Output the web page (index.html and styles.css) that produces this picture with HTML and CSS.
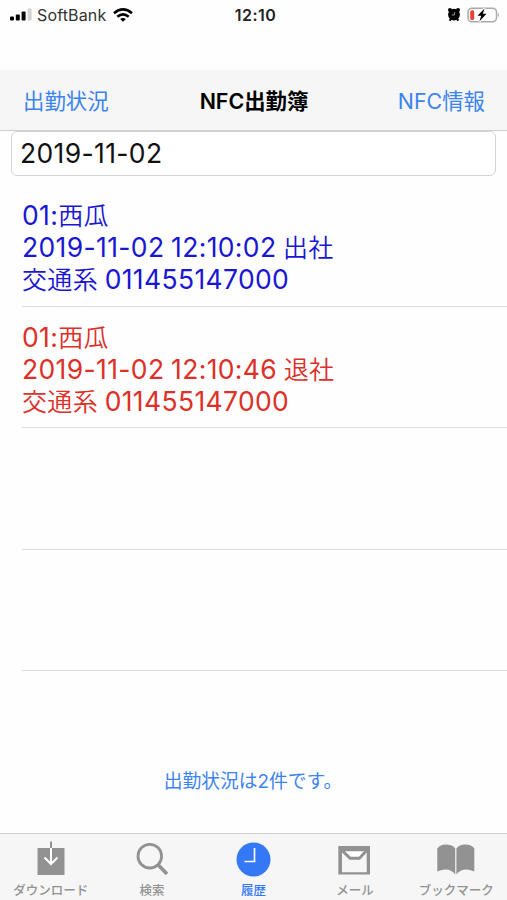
FILE: index.html
```html
<!DOCTYPE html>
<html lang="ja">
<head>
  <meta charset="UTF-8">
  <meta name="viewport" content="width=device-width, initial-scale=1.0">
  <title>NFC出勤簿</title>
  <link rel="stylesheet" href="styles.css">
</head>
<body>

  <!-- Status bar -->
  <div class="status">
    <div class="carrier">
      <svg width="23" height="13" viewBox="0 0 23 13">
        <rect x="0" y="8.5" width="4" height="4" rx="1"/>
        <rect x="5.8" y="6.5" width="4" height="6" rx="1"/>
        <rect x="11.6" y="3.5" width="4" height="9" rx="1"/>
        <rect x="17.6" y="0.5" width="4" height="12" rx="1" fill="#d2d2d2"/>
      </svg>
      <span class="carrier-name">SoftBank</span>
      <svg width="20" height="14" viewBox="0 0 20 14" fill="none" stroke="#000" stroke-width="2.6">
        <path d="M1 5.2 Q10 -2.4 19 5.2"/>
        <path d="M4.3 8.8 Q10 3.8 15.7 8.8"/>
        <path d="M10 13.8 L7.1 11 Q10 8.8 12.9 11 Z" fill="#000" stroke="none"/>
      </svg>
    </div>
    <div class="time">12:10</div>
    <div class="power">
      <svg width="14" height="15" viewBox="0 0 14 15">
        <circle cx="7" cy="7.6" r="5.9"/>
        <circle cx="3" cy="3" r="2"/>
        <circle cx="11" cy="3" r="2"/>
        <path d="M2.5 13.6 L4.5 11.5 M11.5 13.6 L9.5 11.5" stroke="#000" stroke-width="2"/>
        <path d="M7.4 5 V8 H4.8" fill="none" stroke="#bbb" stroke-width="0.8"/>
      </svg>
      <svg width="34" height="18" viewBox="0 0 34 18">
        <rect x="1" y="2.2" width="28.5" height="13.6" rx="4" fill="none" stroke="#a9a9a9" stroke-width="1.5"/>
        <path d="M31 6.8 Q33.2 9 31 11.2 Z" fill="#a9a9a9"/>
        <rect x="3.2" y="4.3" width="4" height="9.6" rx="1.6" fill="#ee4034"/>
        <path d="M17.5 2.5 L10.5 9.8 H14.2 L12.4 15.5 L19.5 7.8 H15.8 Z" stroke="#fefefe" stroke-width="2.4" paint-order="stroke"/>
      </svg>
    </div>
  </div>

  <!-- Navigation bar -->
  <div class="navbar">
    <a class="nav-left">出勤状況</a>
    <h1>NFC出勤簿</h1>
    <a class="nav-right">NFC情報</a>
  </div>

  <div class="date-field">2019-11-02</div>

  <!-- Attendance records -->
  <ul class="records">
    <li class="record in">
      <p>01:<span class="kanji">西瓜</span></p>
      <p>2019-11-02 12:10:02 <span class="kanji">出社</span></p>
      <p><span class="kanji">交通系</span> 011455147000</p>
    </li>
    <li class="record out">
      <p>01:<span class="kanji">西瓜</span></p>
      <p>2019-11-02 12:10:46 <span class="kanji">退社</span></p>
      <p><span class="kanji">交通系</span> 011455147000</p>
    </li>
    <li class="record"></li>
    <li class="record"></li>
  </ul>

  <div class="summary">出勤状況は2件です。</div>

  <!-- Tab bar -->
  <div class="tabs">
    <a class="tab">
      <svg width="40" height="40" viewBox="0 0 40 40">
        <path d="M6.5 11 H33.5 V38 H6.5 Z"/>
        <path d="M20 11 V27 M13.5 20.5 L20 27 L26.5 20.5" fill="none" stroke="#fff" stroke-width="2"/>
        <path d="M20 4.5 V11" stroke="#929292" stroke-width="2"/>
      </svg>
      <span>ダウンロード</span>
    </a>
    <a class="tab">
      <svg width="40" height="40" viewBox="0 0 40 40" fill="none" stroke="#929292">
        <circle cx="17.8" cy="19.2" r="11.8" stroke-width="2.8"/>
        <path d="M25.8 27.5 L35 37" stroke-width="3.6"/>
      </svg>
      <span>検索</span>
    </a>
    <a class="tab active">
      <svg width="40" height="40" viewBox="0 0 40 40">
        <circle cx="20.5" cy="22.5" r="17"/>
        <path d="M21.5 11 V24.5 H11.5" fill="none" stroke="#fff" stroke-width="1.7"/>
      </svg>
      <span>履歴</span>
    </a>
    <a class="tab">
      <svg width="40" height="40" viewBox="0 0 40 40">
        <path d="M3.3 9 H35 V37.5 H3.3 Z M7 15.5 V35.3 H31.7 V15.5 L25 22.7 H14.5 Z" fill-rule="evenodd"/>
        <path d="M10 14.3 H29 L23.8 19.7 H15.7 Z" fill="#fff"/>
      </svg>
      <span>メール</span>
    </a>
    <a class="tab">
      <svg width="40" height="40" viewBox="0 0 40 40">
        <path d="M1.3 11.5 Q4 7.5 10 7.5 Q16.5 7.5 19.2 11.5 V37.5 Q13 29.5 1.3 34.5 Z"/>
        <path d="M38.3 11.5 Q35.6 7.5 29.6 7.5 Q23.1 7.5 20.4 11.5 V37.5 Q26.6 29.5 38.3 34.5 Z"/>
      </svg>
      <span>ブックマーク</span>
    </a>
  </div>

</body>
</html>
```
FILE: styles.css
```css
* {
  box-sizing: border-box;
}

body {
  margin: 0;
  height: 900px;
  display: flex;
  flex-direction: column;
  overflow: hidden;
  font-family: Inter, "Noto Sans CJK JP", sans-serif;
  background: #fefefe;
  color: #000;
}

svg {
  display: block;
}

/* status bar */
.status {
  height: 70px;
  padding: 0 6px 0 10px;
  display: grid;
  grid-template-columns: 1fr auto 1fr;
  align-items: start;
}

.carrier,
.power {
  height: 29px;
  display: flex;
  align-items: center;
}

.carrier-name {
  margin: 1px 7px 0 4px;
  font-size: 16px;
  letter-spacing: 0.15px;
  color: #333;
}

.time {
  line-height: 30px;
  font-size: 16px;
  font-weight: 600;
  letter-spacing: 0.5px;
  color: #222;
}

.power {
  justify-content: flex-end;
  gap: 6px;
}

/* navigation bar */
.navbar {
  height: 61px;
  padding: 1px 22px 0 23px;
  display: grid;
  grid-template-columns: 1fr auto 1fr;
  align-items: center;
  background: #f6f6f6;
  border-bottom: 1px solid #cfcfcf;
  font-size: 21.4px;
  line-height: 30px;
  color: #3b83f0;
}

.navbar h1 {
  margin: 0;
  font-size: 21.4px;
  font-weight: 600;
  color: #000;
}

.nav-right {
  text-align: right;
}

.date-field {
  height: 45px;
  margin: 0 11px;
  padding-left: 8px;
  line-height: 43px;
  font-size: 26.5px;
  letter-spacing: 0.35px;
  border: 1.5px solid #d3d3d3;
  border-radius: 6px;
  background: #fff;
  color: #111;
}

/* attendance records */
.records {
  margin: 9px 0 0;
  padding: 0 0 0 22px;
  list-style: none;
}

.record {
  height: 121.5px;
  padding-top: 14px;
  border-bottom: 1px solid #dcdcdc;
  font-size: 26.5px;
  line-height: 32px;
  letter-spacing: 0.35px;
  word-spacing: -1.2px;
}

.record p {
  height: 32px;
  margin: 0;
  white-space: pre;
}

.kanji {
  font-size: 25px;
  font-weight: 350;
}

.in {
  color: #1a16d4;
}

.out {
  color: #dc3029;
}

.summary {
  margin-top: 97px;
  padding-right: 1px;
  text-align: center;
  font-size: 18.8px;
  line-height: 28px;
  color: #3b83f0;
}

/* tab bar */
.tabs {
  height: 67px;
  margin-top: auto;
  display: grid;
  grid-template-columns: repeat(5, 1fr);
  background: #f6f6f6;
  border-top: 1.5px solid #d0d0d0;
}

.tab {
  padding-top: 3px;
  display: flex;
  flex-direction: column;
  align-items: center;
  font-size: 12.5px;
  font-weight: 500;
  line-height: 27px;
  color: #929292;
  fill: currentColor;
}

.active {
  color: #3478f6;
}
```
